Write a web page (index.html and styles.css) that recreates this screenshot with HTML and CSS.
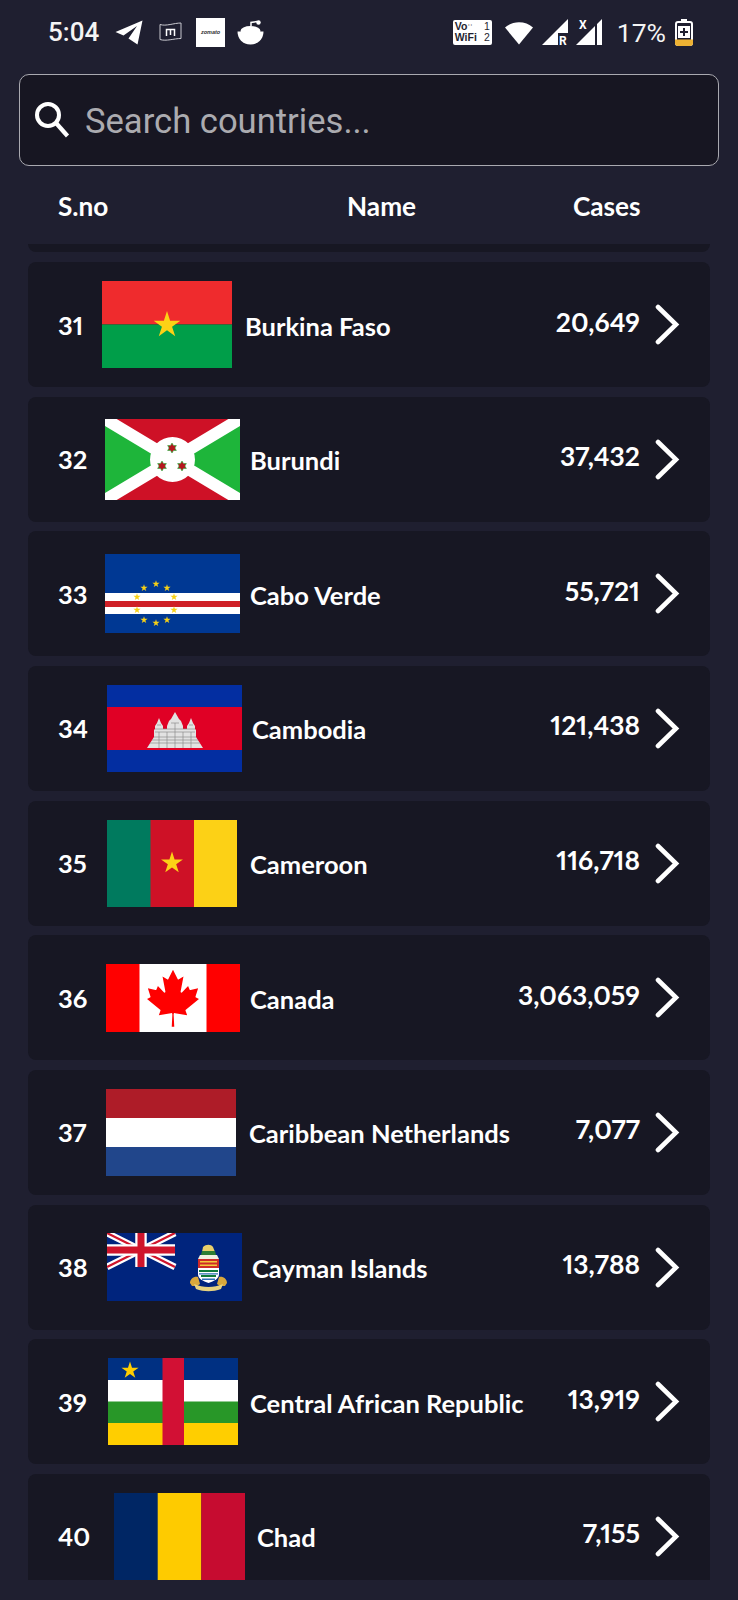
FILE: index.html
```html
<!DOCTYPE html>
<html lang="en">
<head>
<meta charset="utf-8">
<title>Countries</title>
<link rel="stylesheet" href="styles.css">
</head>
<body>
<svg class="sprites" width="0" height="0">
  <defs>
    <polygon id="s5" points="0,-1 .224,-.309 .951,-.309 .363,.118 .588,.809 0,.382 -.588,.809 -.363,.118 -.951,-.309 -.224,-.309"/>
    <polygon id="s6" points="0,-1 .29,-.5 .87,-.5 .58,0 .87,.5 .29,.5 0,1 -.29,.5 -.87,.5 -.58,0 -.87,-.5 -.29,-.5"/>
    <path id="chev" d="M3 3 L21 20.500 L3 38" fill="none" stroke="#fff" stroke-width="4.600" stroke-linecap="round" stroke-linejoin="miter"/>
  </defs>
</svg>
<div class="app">
  <header class="status">
    <div class="status-left">
      <span class="clock">5:04</span>
      <svg class="ic-telegram" width="28" height="26" viewBox="0 0 28 26"><path fill="#fff" d="M0.500 13 27.500 1.500 22.500 25.500 13.500 19.500 22 7 8.500 16.500z"/></svg>
      <svg class="ic-m" width="23" height="20" viewBox="0 0 23 20"><path fill="none" stroke="#c9c9cf" stroke-width="1" d="M1 2.500C7 4.500 15 1 22 1v15.500C15 16.500 7 19.500 1 17.500z"/><path fill="none" stroke="#fff" stroke-width="1.500" d="M7.500 14V7.500h8V14M11.500 7.500V13"/></svg>
      <span class="ic-zomato">zomato</span>
      <svg class="ic-reddit" width="27" height="25" viewBox="0 0 27 25"><path fill="#fff" d="M0.500 11.500h26c0 7-5 13-13 13s-13-6-13-13z"/><ellipse cx="13.500" cy="11" rx="10" ry="5" fill="#fff"/><path fill="none" stroke="#fff" stroke-width="1.500" d="M14 6V2.500l6-1"/><circle cx="21.500" cy="2.500" r="2.200" fill="#fff"/></svg>
    </div>
    <div class="status-right">
      <div class="vowifi"><span class="vo-main">Vo<small>ʾʾ</small><br>WiFi</span><span class="vo-nums">1<br>2</span></div>
      <svg class="ic-wifi" width="30" height="25" viewBox="0 0 30 25"><path fill="#fff" d="M1 7.500C8.500 .5 21.500 .5 29 7.500L15 24.500z"/></svg>
      <div class="sig">
        <svg width="27" height="26" viewBox="0 0 27 26"><path fill="#fff" d="M0 26 26 0V14H16V26z"/><text x="17" y="26" class="sig-r">R</text></svg>
      </div>
      <div class="sig">
        <svg width="27" height="26" viewBox="0 0 27 26"><path fill="#fff" d="M0 26 19 7V26zM21 5 26 0V26H21z"/><text x="3" y="10" class="sig-x">X</text></svg>
      </div>
      <span class="pct">17%</span>
      <svg class="ic-batt" width="18" height="27" viewBox="0 0 18 27"><path fill="#fff" d="M6 0h6v2H6z"/><rect x="1" y="3" width="16" height="23" rx="2" fill="#1f1f30" stroke="#fff" stroke-width="2"/><path fill="#eeb233" d="M0 20.500h18V24a3 3 0 0 1-3 3H3a3 3 0 0 1-3-3z"/><path fill="#fff" d="M3 7h12v12H3z"/><path fill="#1f1f30" d="M8 9h2v3h3v2h-3v3H8v-3H5v-2h3z"/></svg>
    </div>
  </header>

  <div class="search">
    <svg class="search-ic" width="36" height="38" viewBox="0 0 36 38"><circle cx="14" cy="14" r="11" fill="none" stroke="#fff" stroke-width="4"/><path d="M22.500 22.500 33.500 35" stroke="#fff" stroke-width="4.200" fill="none"/></svg>
    <span class="placeholder">Search countries...</span>
  </div>

  <div class="thead">
    <span>S.no</span>
    <span>Name</span>
    <span>Cases</span>
  </div>

  <main class="list">
    <div class="card-stub"></div>

    <div class="card">
      <span class="sno g14">31</span>
      <svg class="flag narrow" width="130" height="87" viewBox="0 0 130 87"><rect width="130" height="43.500" fill="#ef2b2d"/><rect y="43.500" width="130" height="43.500" fill="#009e49"/><use href="#s5" transform="translate(65 44) scale(14)" fill="#fcd116"/></svg>
      <span class="name">Burkina Faso</span>
      <span class="cases">20,649</span>
      <svg class="chev" width="25" height="41" viewBox="0 0 25 41"><use href="#chev"/></svg>
    </div>

    <div class="card">
      <span class="sno g17">32</span>
      <svg class="flag wide" width="135" height="81" viewBox="0 0 135 81"><rect width="135" height="81" fill="#ce1126"/><path fill="#1eb53a" d="M0 0 67.500 40.500 0 81zM135 0 67.500 40.500 135 81z"/><path stroke="#fff" stroke-width="12" d="M0 0 135 81M135 0 0 81"/><circle cx="67.500" cy="40.500" r="22.500" fill="#fff"/><g fill="#b5161f" stroke="#1eb53a" stroke-width=".12"><use href="#s6" transform="translate(67 29) scale(5)"/><use href="#s6" transform="translate(57 47) scale(5)"/><use href="#s6" transform="translate(77 47) scale(5)"/></g></svg>
      <span class="name">Burundi</span>
      <span class="cases">37,432</span>
      <svg class="chev" width="25" height="41" viewBox="0 0 25 41"><use href="#chev"/></svg>
    </div>

    <div class="card">
      <span class="sno g17">33</span>
      <svg class="flag wide" width="135" height="79" viewBox="0 0 135 79"><rect width="135" height="79" fill="#003893"/><rect y="39" width="135" height="21" fill="#fff"/><rect y="47" width="135" height="6" fill="#cf2027"/><g fill="#f7d116"><use href="#s5" transform="translate(51 30) scale(3.800)"/><use href="#s5" transform="translate(39 34) scale(3.800)"/><use href="#s5" transform="translate(62 34) scale(3.800)"/><use href="#s5" transform="translate(32 43) scale(3.800)"/><use href="#s5" transform="translate(69 43) scale(3.800)"/><use href="#s5" transform="translate(32 56) scale(3.800)"/><use href="#s5" transform="translate(69 56) scale(3.800)"/><use href="#s5" transform="translate(39 66) scale(3.800)"/><use href="#s5" transform="translate(62 66) scale(3.800)"/><use href="#s5" transform="translate(51 69) scale(3.800)"/></g></svg>
      <span class="name">Cabo Verde</span>
      <span class="cases">55,721</span>
      <svg class="chev" width="25" height="41" viewBox="0 0 25 41"><use href="#chev"/></svg>
    </div>

    <div class="card">
      <span class="sno g19">34</span>
      <svg class="flag wide" width="135" height="87" viewBox="0 0 135 87"><rect width="135" height="87" fill="#032ea1"/><rect y="22" width="135" height="43" fill="#e00025"/><path fill="#e2e2e2" d="M40 63 47 52V45L48 44V41L50 38 52 33 54 38 56 41V44H60V41L62 36 64 34 68 27 72 34 74 36 76 41V44H80V41L82 38 84 33 86 38 88 41V44L89 45V52L96 63z"/><path fill="none" stroke="#8d8d8d" stroke-width=".7" d="M43 58H93M45 55H91M47 52H89M48 47H88M48 44H88M50 40H54M64 38H72M82 40H86M52 47V63M60 47V63M68 38V63M76 47V63M84 47V63"/></svg>
      <span class="name">Cambodia</span>
      <span class="cases">121,438</span>
      <svg class="chev" width="25" height="41" viewBox="0 0 25 41"><use href="#chev"/></svg>
    </div>

    <div class="card">
      <span class="sno g19">35</span>
      <svg class="flag narrow" width="130" height="87" viewBox="0 0 130 87"><rect width="44" height="87" fill="#007a5e"/><rect x="43.500" width="43.500" height="87" fill="#ce1126"/><rect x="87" width="43" height="87" fill="#fcd116"/><use href="#s5" transform="translate(65 43) scale(11.500)" fill="#fcd116"/></svg>
      <span class="name">Cameroon</span>
      <span class="cases">116,718</span>
      <svg class="chev" width="25" height="41" viewBox="0 0 25 41"><use href="#chev"/></svg>
    </div>

    <div class="card">
      <span class="sno g18">36</span>
      <svg class="flag wide" width="134" height="68" viewBox="0 0 9600 4800" preserveAspectRatio="none"><path fill="#f00" d="M0 0h9600v4800H0z"/><path fill="#fff" d="m2400 0h4800v4800h-4800zm2490 4430-45-863a95 95 0 0 1 111-98l859 151-116-320a65 65 0 0 1 20-73l941-762-212-99a65 65 0 0 1-34-79l186-572-542 115a65 65 0 0 1-73-38l-105-247-423 454a65 65 0 0 1-111-57l204-1052-327 189a65 65 0 0 1-91-27l-332-652-332 652a65 65 0 0 1-91 27l-327-189 204 1052a65 65 0 0 1-111 57l-423-454-105 247a65 65 0 0 1-73 38l-542-115 186 572a65 65 0 0 1-34 79l-212 99 941 762a65 65 0 0 1 20 73l-116 320 859-151a95 95 0 0 1 111 98l-45 863z"/></svg>
      <span class="name">Canada</span>
      <span class="cases">3,063,059</span>
      <svg class="chev" width="25" height="41" viewBox="0 0 25 41"><use href="#chev"/></svg>
    </div>

    <div class="card">
      <span class="sno g18">37</span>
      <svg class="flag narrow" width="130" height="87" viewBox="0 0 130 87"><rect width="130" height="29" fill="#ae1c28"/><rect y="29" width="130" height="29" fill="#fff"/><rect y="58" width="130" height="29" fill="#21468b"/></svg>
      <span class="name">Caribbean Netherlands</span>
      <span class="cases">7,077</span>
      <svg class="chev" width="25" height="41" viewBox="0 0 25 41"><use href="#chev"/></svg>
    </div>

    <div class="card">
      <span class="sno g19">38</span>
      <svg class="flag wide" width="135" height="68" viewBox="0 0 135 68"><rect width="135" height="68" fill="#00247d"/><g><path stroke="#fff" stroke-width="6.500" d="M0 0 68 34M68 0 0 34"/><path stroke="#cf142b" stroke-width="2.200" d="M0 0 68 34M68 0 0 34"/><path stroke="#fff" stroke-width="11.500" d="M34 0V34M0 17H68"/><path stroke="#cf142b" stroke-width="7" d="M34 0V34M0 17H68"/></g><path fill="#e9cf6a" d="M96 14c3-3 8-3 10 0l2 5H95z"/><path fill="#2e7d32" d="M95 18h13l1 4H94z"/><path fill="#f2f0e0" d="M93 22h17l2 4H91z"/><rect x="91" y="26" width="21" height="9" fill="#cf2a27"/><path fill="#f3c83a" d="M93 28h17v1.500H93zM93 31.500h17V33H93z"/><path fill="#fff" d="M91 35h21v6c0 5-5 7-10.500 9C96 48 91 46 91 41z"/><path fill="none" stroke="#0f7a3c" stroke-width="2" d="M92 38H111M94 43H109"/><path fill="#2f6fb5" d="M92 40.200h19v1.300H92zM95 45.500h13V47H95z"/><path fill="#d8a83c" d="M83 50c0-4 4-7 8-6l2 7-3 2h-5zM120 50c0-4-4-7-8-6l-2 7 3 2h5z"/><path fill="#e6d27f" d="M87 51c9 4 20 4 29 0l-2 5c-8 3-17 3-25 0z"/></svg>
      <span class="name">Cayman Islands</span>
      <span class="cases">13,788</span>
      <svg class="chev" width="25" height="41" viewBox="0 0 25 41"><use href="#chev"/></svg>
    </div>

    <div class="card">
      <span class="sno g20">39</span>
      <svg class="flag narrow n12" width="130" height="87" viewBox="0 0 130 87"><rect width="130" height="22" fill="#003082"/><rect y="22" width="130" height="22" fill="#fff"/><rect y="43.500" width="130" height="22" fill="#289728"/><rect y="65" width="130" height="22" fill="#ffce00"/><rect x="54.500" width="21.500" height="87" fill="#d21034"/><use href="#s5" transform="translate(22 12.500) scale(9)" fill="#ffce00"/></svg>
      <span class="name">Central African Republic</span>
      <span class="cases">13,919</span>
      <svg class="chev" width="25" height="41" viewBox="0 0 25 41"><use href="#chev"/></svg>
    </div>

    <div class="card">
      <span class="sno g26">40</span>
      <svg class="flag narrow n12" width="131" height="87" viewBox="0 0 131 87"><rect width="44" height="87" fill="#002664"/><rect x="43.700" width="43.700" height="87" fill="#fecb00"/><rect x="87.300" width="43.700" height="87" fill="#c60c30"/></svg>
      <span class="name">Chad</span>
      <span class="cases">7,155</span>
      <svg class="chev" width="25" height="41" viewBox="0 0 25 41"><use href="#chev"/></svg>
    </div>
  </main>
</div>
</body>
</html>
```
FILE: styles.css
```css
* { box-sizing: border-box; }
html, body { margin: 0; padding: 0; height: 100%; }
body {
  background: #1f1f30;
  color: #fff;
  font-family: "Lato", "Liberation Sans", sans-serif;
  overflow: hidden;
}
.sprites { display: block; height: 0; width: 0; }
.app { width: 738px; height: 1600px; display: flex; flex-direction: column; overflow: hidden; }

.status {
  height: 64px;
  padding: 0 45px 0 48px;
  display: flex;
  justify-content: space-between;
  align-items: center;
  font-family: "Roboto", "Liberation Sans", sans-serif;
}
.status-left, .status-right { display: flex; align-items: center; }
.clock { font-size: 26px; font-weight: 500; color: #f4f4f4; width: 67px; }
.ic-telegram { margin-right: 16px; }
.ic-m { margin-right: 14px; }
.ic-zomato {
  width: 29px; height: 29px;
  background: #fff; color: #333;
  font: italic 700 5.500px/29px "Liberation Sans", sans-serif;
  text-align: center;
  margin-right: 12px;
}
.vowifi {
  display: flex; justify-content: space-between;
  width: 39px; height: 25px;
  background: #fff; color: #1f1f30;
  border-radius: 2px;
  padding: 1px 2px;
  font: 700 10.500px/11.500px "Liberation Sans", sans-serif;
  margin-right: 12px;
}
.vo-main small { font-size: 8px; line-height: 0; }
.vo-nums { font-weight: 400; text-align: right; }
.ic-wifi { margin-right: 8px; }
.sig { display: flex; margin-right: 7px; }
.sig svg { display: block; overflow: visible; }
.sig-r { font: 700 12px "Roboto", sans-serif; fill: #fff; }
.sig-x { font: 700 12px "Roboto", sans-serif; fill: #fff; }
.pct { font-size: 26.500px; font-weight: 400; margin: 0 9px 0 7px; color: #f4f4f4; }

.search {
  margin: 10px 19px 0;
  height: 92px;
  flex: none;
  background: #171622;
  border: 1px solid #a9a9b0;
  border-radius: 10px;
  display: flex;
  align-items: center;
  padding: 2px 0 0 14px;
}
.search-ic { margin-right: 15px; margin-top: -2px; }
.placeholder {
  font-family: "Roboto", "Liberation Sans", sans-serif;
  font-size: 34.600px;
  color: #ababb0;
}

.thead {
  display: grid;
  grid-template-columns: 289px 226px auto;
  padding: 2px 0 0 58px;
  height: 78px;
  flex: none;
  align-items: center;
  font-size: 26.200px;
  font-weight: 700;
}

.list {
  height: 1336px;
  flex: none;
  overflow: hidden;
  padding: 0 28px;
}
.card-stub {
  height: 8px;
  margin-bottom: 10px;
  background: #171723;
  border-radius: 0 0 8px 8px;
}
.card {
  height: 125px;
  margin-bottom: 9.670px;
  background: #171723;
  border-radius: 8px;
  display: flex;
  align-items: center;
  padding: 0 30px 0 30px;
  font-size: 25.500px;
  font-weight: 700;
  font-variant-numeric: proportional-nums;
}
.sno { flex: none; width: 30px; }
.g14 { margin-right: 14px; }
.g17 { margin-right: 17px; }
.g18 { margin-right: 18px; }
.g19 { margin-right: 19px; }
.g20 { margin-right: 20px; }
.g26 { margin-right: 26px; }
.flag { flex: none; display: block; }
.flag.narrow { margin-right: 13px; }
.flag.n12 { margin-right: 12px; }
.flag.wide { margin-right: 10px; }
.name { flex: 1; white-space: nowrap; position: relative; top: 1px; }
.cases { font-size: 26.400px; margin-right: 15px; position: relative; top: -3px; }
.chev { flex: none; }
```
